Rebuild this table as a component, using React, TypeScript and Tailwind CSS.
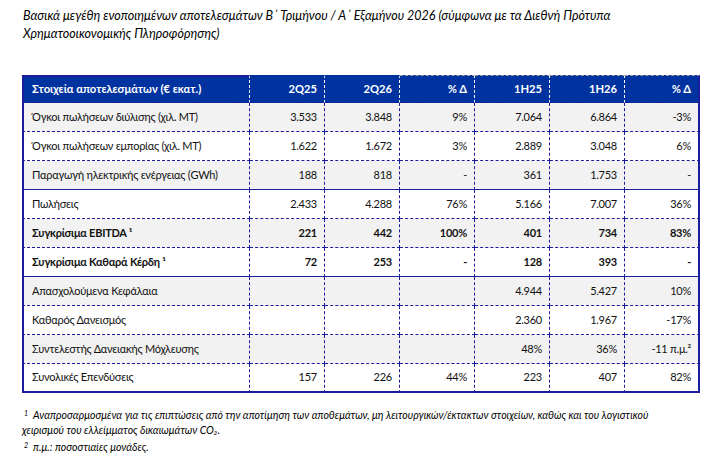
const navy = "border-[#1c1c9c]"

type Row = { label: string; values: string[]; shade?: boolean; bold?: boolean; solid?: boolean }

const rows: Row[] = [
  { label: "Όγκοι πωλήσεων διύλισης (χιλ. MT)", values: ["3.533", "3.848", "9%", "7.064", "6.864", "-3%"], shade: true },
  { label: "Όγκοι πωλήσεων εμπορίας (χιλ. MT)", values: ["1.622", "1.672", "3%", "2.889", "3.048", "6%"] },
  { label: "Παραγωγή ηλεκτρικής ενέργειας (GWh)", values: ["188", "818", "-", "361", "1.753", "-"], shade: true, solid: true },
  { label: "Πωλήσεις", values: ["2.433", "4.288", "76%", "5.166", "7.007", "36%"] },
  { label: "Συγκρίσιμα EBITDA ¹", values: ["221", "442", "100%", "401", "734", "83%"], shade: true, bold: true },
  { label: "Συγκρίσιμα Καθαρά Κέρδη ¹", values: ["72", "253", "-", "128", "393", "-"], bold: true, solid: true },
  { label: "Απασχολούμενα Κεφάλαια", values: ["", "", "", "4.944", "5.427", "10%"], shade: true },
  { label: "Καθαρός Δανεισμός", values: ["", "", "", "2.360", "1.967", "-17%"] },
  { label: "Συντελεστής Δανειακής Μόχλευσης", values: ["", "", "", "48%", "36%", "-11 π.μ.²"], shade: true },
  { label: "Συνολικές Επενδύσεις", values: ["157", "226", "44%", "223", "407", "82%"] },
]

const heads = ["2Q25", "2Q26", "% Δ", "1H25", "1H26", "% Δ"]

export default function App() {
  return (
    <div className="w-[714px] h-[461px] bg-white text-black font-['Lato','Open_Sans',sans-serif]">
      <p className="pt-[7px] pl-[23px] text-[12.5px] leading-[18px] italic">
        Βασικά μεγέθη ενοποιημένων αποτελεσμάτων Β΄ Τριμήνου / Α΄ Εξαμήνου 2026 (σύμφωνα με τα Διεθνή Πρότυπα
        <br />
        Χρηματοοικονομικής Πληροφόρησης)
      </p>

      <div className="pl-[22px] pt-[32px]">
        <table className="w-[677px] table-fixed border-separate border-spacing-0 text-[11px] tracking-[-0.25px] text-[#111]">
          <colgroup>
            <col className="w-[228px]" />
            {heads.map((h, i) => (
              <col key={i} className="w-[75px]" />
            ))}
          </colgroup>
          <thead>
            <tr className="bg-[#0033a0] text-white font-bold text-[11.2px] tracking-normal">
              <th className={`h-[28px] px-[8px] text-left border-l-2 border-t-2 border-r border-r-white [border-right-style:dashed] border-b ${navy} [border-bottom-style:dashed]`}>
                Στοιχεία αποτελεσμάτων (€ εκατ.)
              </th>
              {heads.map((h, i) => (
                <th
                  key={i}
                  className={`h-[28px] px-[7px] text-right border-b ${navy} [border-bottom-style:dashed] ${
                    i < 2 ? "border-t-2 border-t-[#0033a0]" : "border-t border-t-[#a0a0a0] [border-top-style:dashed]"
                  } ${i < 5 ? "border-r border-r-white [border-right-style:dashed]" : `border-r-2 border-r-[#1c1c9c]`}`}
                >
                  {h}
                </th>
              ))}
            </tr>
          </thead>
          <tbody>
            {rows.map((r, ri) => {
              const last = ri === rows.length - 1
              const bottom = last
                ? "border-b-2"
                : r.solid
                ? "border-b"
                : "border-b [border-bottom-style:dashed]"
              return (
                <tr key={ri} className={`${r.shade ? "bg-[#f2f2f2]" : "bg-white"} ${r.bold ? "font-bold" : ""}`}>
                  <td className={`h-[29px] px-[8px] text-left border-l-2 ${navy} border-r [border-right-style:dashed] ${bottom}`}>
                    {r.label}
                  </td>
                  {r.values.map((v, vi) => (
                    <td
                      key={vi}
                      className={`h-[29px] px-[7px] text-right ${navy} ${bottom} ${
                        vi < 5 ? "border-r [border-right-style:dashed]" : "border-r-2"
                      }`}
                    >
                      {v}
                    </td>
                  ))}
                </tr>
              )
            })}
          </tbody>
        </table>
      </div>

      <div className="pt-[13px] pl-[22px] pr-[10px] text-[10.5px] leading-[15px] italic">
        <p>
          <span className="pl-[2px] text-[7px] align-[3px]">1</span>
          <span className="pl-[5px]">
            Αναπροσαρμοσμένα για τις επιπτώσεις από την αποτίμηση των αποθεμάτων, μη λειτουργικών/έκτακτων στοιχείων, καθώς και του λογιστικού
          </span>
          <br />
          χειρισμού του ελλείμματος δικαιωμάτων CO₂.
        </p>
        <p>
          <span className="pl-[2px] text-[7px] align-[3px]">2</span>
          <span className="pl-[5px]">π.μ.: ποσοστιαίες μονάδες.</span>
        </p>
      </div>
    </div>
  )
}
